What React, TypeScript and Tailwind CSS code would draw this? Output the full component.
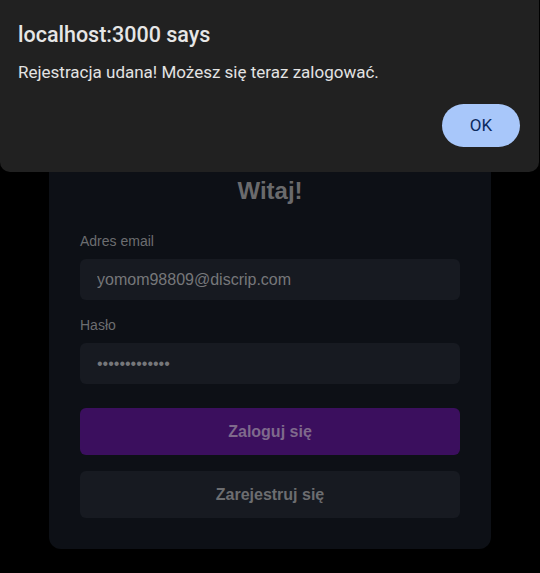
import React from 'react';

// Alert dialog over the dimmed login card
const AlertDialog: React.FC = () => (
  <div className="absolute top-0 left-0 w-[539px] h-[172px] rounded-b-[10px] bg-[#212121] px-[18px] pt-[22px] font-['Roboto','Noto_Sans',sans-serif]">
    <h2 className="text-[21.5px] leading-[26px] font-medium text-[#e6e6e6]">localhost:3000 says</h2>
    <p className="mt-[13px] text-[17px] leading-[22px] text-[#e3e3e3]">
      Rejestracja udana! Możesz się teraz zalogować.
    </p>
    <div className="flex justify-end mt-[21px] pr-[1px]">
      <button className="w-[78px] h-[43px] rounded-full bg-[#a8c7fa] text-[#0b2a5e] text-[17px] font-normal">
        OK
      </button>
    </div>
  </div>
);

const App: React.FC = () => {
  return (
    <div className="relative min-h-screen bg-black pt-[143px] font-['Liberation_Sans',Arial,sans-serif]">
      <div className="w-[442px] mx-auto rounded-[12px] bg-[#0d1016] px-[31px] pt-8 pb-[31px]">
        <h1 className="text-center text-2xl font-bold text-[#6a6a6c]">Witaj!</h1>

        <form className="mt-6" onSubmit={(e) => e.preventDefault()}>
          <label className="block text-sm text-[#6c6d70] mb-2">Adres email</label>
          <input
            type="email"
            defaultValue="yomom98809@discrip.com"
            readOnly
            className="block w-full h-[41px] rounded-md bg-[#171a21] px-[17px] text-base text-[#76777a] outline-none"
          />

          <label className="block text-sm text-[#6c6d70] mt-[15px] mb-2">Hasło</label>
          <input
            type="password"
            defaultValue="yomom98809123"
            readOnly
            className="block w-full h-[41px] rounded-md bg-[#171a21] px-[17px] text-base text-[#76777a] outline-none"
          />

          <button
            type="submit"
            className="mt-6 w-full h-[47px] rounded-md bg-[#3b0f5e] text-base font-bold text-[#7f6a8c]"
          >
            Zaloguj się
          </button>
          <button
            type="button"
            className="mt-4 w-full h-[47px] rounded-md bg-[#171a21] text-base font-bold text-[#6c6d70]"
          >
            Zarejestruj się
          </button>
        </form>
      </div>

      <AlertDialog />
    </div>
  );
};

export default App;
